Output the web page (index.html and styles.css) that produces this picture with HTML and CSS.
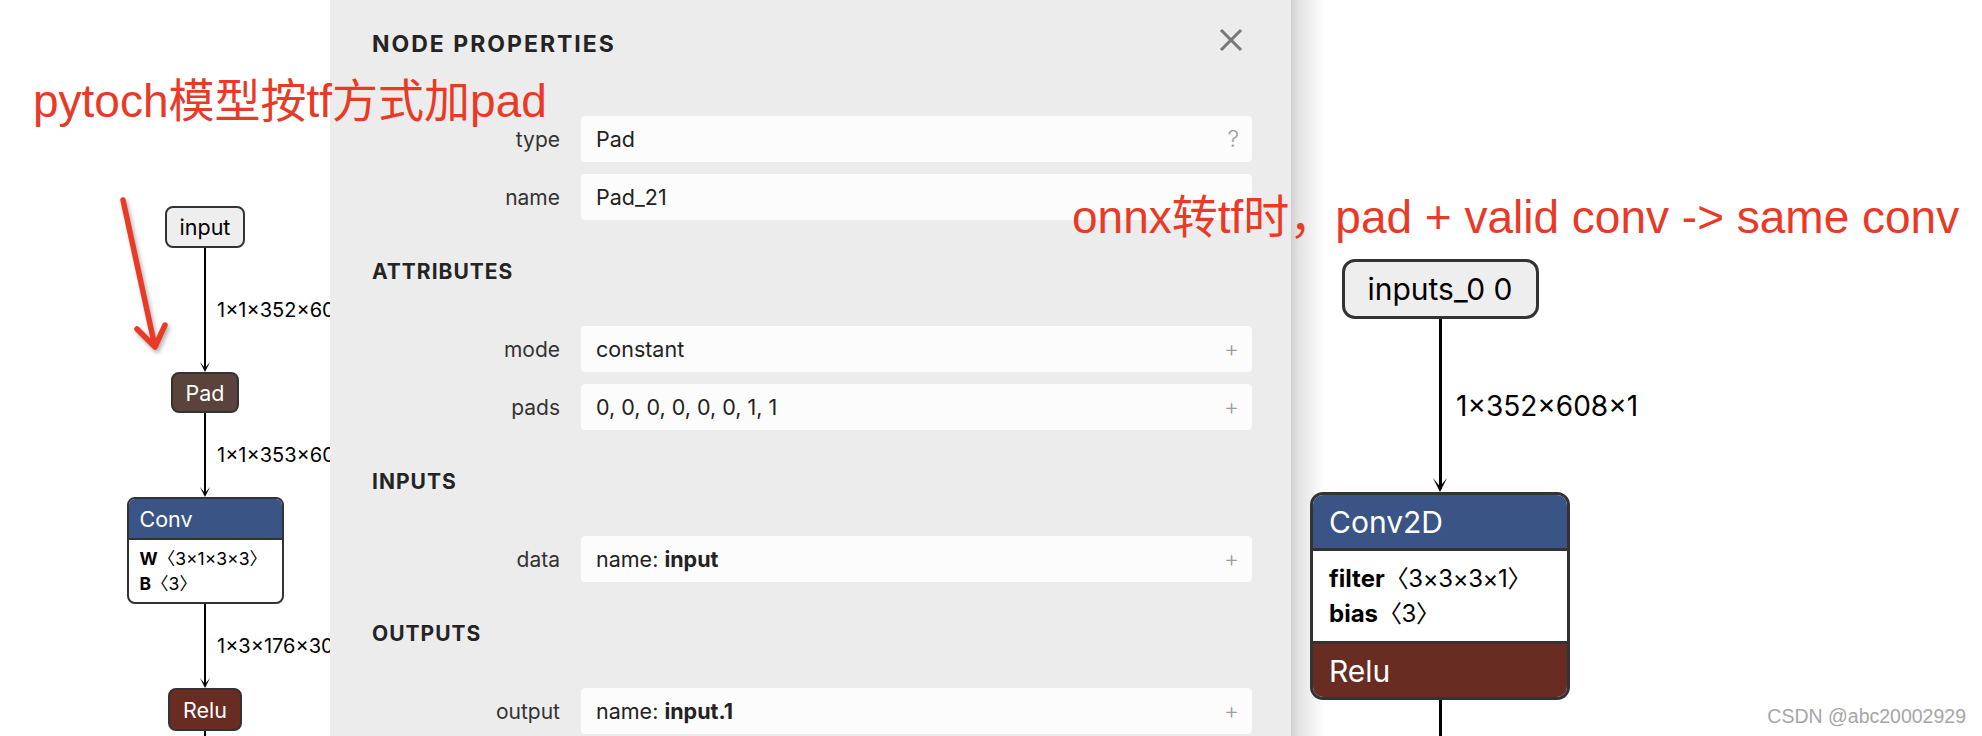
FILE: index.html
```html
<!DOCTYPE html>
<html lang="zh-CN">
<head>
    <meta charset="UTF-8">
    <meta name="viewport" content="width=device-width, initial-scale=1.0">
    <title>Pad_21 - Node Properties</title>
    <link rel="stylesheet" href="styles.css">
</head>
<body>
    <div class="screen">
        <!-- pytorch 导出的 onnx 图 -->
        <div class="canvas canvas-left">
            <div class="graph graph-left">
                <div class="node node-input">input</div>
                <div class="edge edge-first">
                    <span class="edge-label">1×1×352×608</span>
                    <svg class="edge-arrow" viewBox="0 0 10 10"><path d="M0 0 L5 10 L10 0 L5 6 Z"/></svg>
                </div>
                <div class="node node-tensor">Pad</div>
                <div class="edge">
                    <span class="edge-label">1×1×353×609</span>
                    <svg class="edge-arrow" viewBox="0 0 10 10"><path d="M0 0 L5 10 L10 0 L5 6 Z"/></svg>
                </div>
                <div class="node node-block">
                    <div class="node-head">Conv</div>
                    <div class="node-body">
                        <div><b>W</b><span class="shape">〈3×1×3×3〉</span></div>
                        <div><b>B</b><span class="shape">〈3〉</span></div>
                    </div>
                </div>
                <div class="edge">
                    <span class="edge-label">1×3×176×304</span>
                    <svg class="edge-arrow" viewBox="0 0 10 10"><path d="M0 0 L5 10 L10 0 L5 6 Z"/></svg>
                </div>
                <div class="node node-activation">Relu</div>
                <div class="edge edge-tail"></div>
            </div>

            <svg class="pointer" width="330" height="400" viewBox="0 0 330 400">
                <path d="M123 200 L155 347 M137 329 L155 347 L165 325"/>
            </svg>
        </div>

        <aside class="sidebar">
            <header class="sidebar-header">
                <h1 class="sidebar-title">NODE PROPERTIES</h1>
                <button class="close" title="Close">
                    <svg width="24" height="24" viewBox="0 0 24 24"><path d="M2 2 L22 22 M22 2 L2 22"/></svg>
                </button>
            </header>

            <div class="props props-first">
                <div class="prop">
                    <span class="prop-name">type</span>
                    <div class="prop-value"><span>Pad</span><span class="prop-icon">?</span></div>
                </div>
                <div class="prop">
                    <span class="prop-name">name</span>
                    <div class="prop-value"><span>Pad_21</span></div>
                </div>
            </div>

            <section>
                <h2 class="section-title">ATTRIBUTES</h2>
                <div class="props">
                    <div class="prop">
                        <span class="prop-name">mode</span>
                        <div class="prop-value"><span>constant</span><span class="prop-icon">+</span></div>
                    </div>
                    <div class="prop">
                        <span class="prop-name">pads</span>
                        <div class="prop-value"><span>0, 0, 0, 0, 0, 0, 1, 1</span><span class="prop-icon">+</span></div>
                    </div>
                </div>
            </section>

            <section>
                <h2 class="section-title">INPUTS</h2>
                <div class="props">
                    <div class="prop">
                        <span class="prop-name">data</span>
                        <div class="prop-value"><span>name: <b>input</b></span><span class="prop-icon">+</span></div>
                    </div>
                </div>
            </section>

            <section>
                <h2 class="section-title">OUTPUTS</h2>
                <div class="props">
                    <div class="prop">
                        <span class="prop-name">output</span>
                        <div class="prop-value"><span>name: <b>input.1</b></span><span class="prop-icon">+</span></div>
                    </div>
                </div>
            </section>
        </aside>

        <!-- onnx 转 tf 之后的图 -->
        <div class="canvas canvas-right">
            <div class="graph graph-right">
                <div class="node node-input">inputs_0 0</div>
                <div class="edge edge-first">
                    <span class="edge-label">1×352×608×1</span>
                    <svg class="edge-arrow" viewBox="0 0 10 10"><path d="M0 0 L5 10 L10 0 L5 6 Z"/></svg>
                </div>
                <div class="node node-block">
                    <div class="node-head">Conv2D</div>
                    <div class="node-body">
                        <div><b>filter</b><span class="shape">〈3×3×3×1〉</span></div>
                        <div><b>bias</b><span class="shape">〈3〉</span></div>
                    </div>
                    <div class="node-foot">Relu</div>
                </div>
                <div class="edge edge-tail"></div>
            </div>
        </div>

        <p class="note note-left">pytoch模型按tf方式加pad</p>
        <p class="note note-right">onnx转tf时，pad + valid conv -&gt; same conv</p>
        <div class="watermark">CSDN @abc20002929</div>
    </div>
</body>
</html>
```

FILE: styles.css
```css
:root {
    --panel-bg: #ececec;
    --value-bg: #fcfcfc;
    --node-border: #333;
    --layer-color: #3a5585;
    --tensor-color: #59433b;
    --activation-color: #682c23;
    --note-color: #e83a27;
}

* {
    margin: 0;
    padding: 0;
    box-sizing: border-box;
}

body {
    background: #fff;
    font-family: Inter, "Noto Sans CJK SC", sans-serif;
    color: #000;
    overflow: hidden;
}

.screen {
    position: relative;
    display: flex;
    width: 1982px;
    height: 736px;
    overflow: hidden;
}

/* 画布 */
.canvas {
    position: relative;
    height: 100%;
}

.canvas-left {
    width: 330px;
    flex: none;
}

.canvas-right {
    flex: 1;
    margin-left: -1px;
    border-left: 1px solid #b9b9b9;
    background: linear-gradient(to right, #d0d0d0, #e4e4e4 8px, #fff 34px);
}

.graph {
    display: flex;
    flex-direction: column;
    align-items: center;
}

.graph-left {
    width: 250px;
    margin-left: 80px;
    padding-top: 206px;
}

.graph-right {
    width: 298px;
    padding-top: 259px;
}

/* 节点 */
.node {
    display: flex;
    align-items: center;
    justify-content: center;
    flex: none;
    padding: 0 13px;
    border: 2px solid var(--node-border);
    border-radius: 8px;
    font-size: 21.5px;
    color: #fff;
    white-space: nowrap;
}

.node-input {
    height: 42px;
    background: #eee;
    color: #000;
}

.node-tensor {
    height: 41px;
    background: var(--tensor-color);
}

.node-activation {
    height: 43px;
    background: var(--activation-color);
}

.node-block {
    display: block;
    width: 157px;
    padding: 0;
    overflow: hidden;
    background: #fff;
}

.node-head {
    height: 41px;
    padding: 0 11px;
    display: flex;
    align-items: center;
    background: var(--layer-color);
    border-bottom: 2px solid var(--node-border);
}

.node-body {
    padding: 6px 11px;
    font-size: 17.5px;
    line-height: 25px;
    color: #000;
}

.node-body b {
    font-weight: 700;
}

.node-foot {
    display: flex;
    align-items: center;
    background: var(--activation-color);
    border-top: 3px solid var(--node-border);
}

/* 连线 */
.edge {
    position: relative;
    flex: none;
    width: 12px;
    height: 84px;
}

.edge::before {
    content: '';
    position: absolute;
    left: 5px;
    top: 0;
    bottom: 3px;
    width: 2px;
    background: #000;
}

.edge-first {
    height: 124px;
}

.edge-tail {
    height: 40px;
}

.edge-arrow {
    position: absolute;
    left: 1px;
    bottom: 0;
    width: 10px;
    height: 10px;
    fill: #000;
}

.edge-label {
    position: absolute;
    left: 18px;
    top: 50%;
    transform: translateY(-50%);
    font-size: 20px;
    white-space: nowrap;
}

/* 右侧图放大 */
.graph-right .node {
    border-width: 3px;
    border-radius: 13px;
    font-size: 30px;
    padding: 0 16px;
}

.graph-right .node-input {
    height: 60px;
    width: 197px;
}

.graph-right .node-block {
    width: 260px;
    padding: 0;
}

.graph-right .node-head {
    height: 56px;
    padding: 0 16px;
    border-bottom-width: 3px;
}

.graph-right .node-body {
    padding: 10px 16px;
    font-size: 24px;
    line-height: 35px;
}

.graph-right .shape {
    letter-spacing: -0.4px;
}

.graph-right .node-foot {
    height: 56px;
    padding: 0 16px;
}

.graph-right .edge {
    width: 16px;
    height: 173px;
}

.graph-right .edge::before {
    left: 6.5px;
    width: 3px;
}

.graph-right .edge-tail {
    height: 50px;
}

.graph-right .edge-arrow {
    left: 1px;
    width: 14px;
    height: 14px;
}

.graph-right .edge-label {
    left: 24px;
    font-size: 28px;
}

/* 红色箭头标注 */
.pointer {
    position: absolute;
    left: 0;
    top: 0;
    overflow: visible;
    fill: none;
    stroke: var(--note-color);
    stroke-width: 5.5;
    stroke-linecap: round;
    stroke-linejoin: round;
    filter: drop-shadow(2px 3px 2px rgba(0, 0, 0, 0.3));
}

/* 属性面板 */
.sidebar {
    position: relative;
    z-index: 1;
    flex: none;
    width: 961px;
    height: 100%;
    padding: 0 39px 0 42px;
    background: var(--panel-bg);
    color: #222;
}

.sidebar-header {
    display: flex;
    justify-content: space-between;
    align-items: center;
    height: 88px;
}

.sidebar-title {
    font-size: 23px;
    line-height: 27px;
    font-weight: 700;
    letter-spacing: 2px;
    color: #242424;
}

.close {
    margin: -8px 9px 0 0;
    border: none;
    background: none;
    cursor: pointer;
    display: flex;
}

.close svg {
    stroke: #777;
    stroke-width: 3;
    fill: none;
}

.props {
    display: flex;
    flex-direction: column;
    gap: 12px;
}

.props-first {
    margin-top: 28px;
}

.section-title {
    margin: 38px 0 41px;
    font-size: 21px;
    line-height: 27px;
    font-weight: 700;
    letter-spacing: 1px;
    color: #242424;
}

.prop {
    display: grid;
    grid-template-columns: 188px 1fr;
    column-gap: 21px;
    align-items: center;
}

.prop-name {
    text-align: right;
    font-size: 21px;
    color: #333;
}

.prop-value {
    display: flex;
    align-items: center;
    justify-content: space-between;
    height: 46px;
    padding: 0 13px 0 15px;
    border-radius: 4px;
    background: var(--value-bg);
    font-size: 21.5px;
    color: #222;
}

.prop-value b {
    font-weight: 700;
}

.prop-icon {
    font-size: 23px;
    font-weight: 300;
    color: #9c9c9c;
}

/* 标注文字 */
.note {
    position: absolute;
    z-index: 2;
    margin: 0;
    white-space: nowrap;
    font-family: "Liberation Sans", "Noto Sans CJK SC", sans-serif;
    color: var(--note-color);
}

.note-left {
    left: 33px;
    top: 74px;
    font-size: 46px;
    line-height: 54px;
}

.note-right {
    left: 1072px;
    top: 190px;
    font-size: 46px;
    line-height: 54px;
}

.watermark {
    position: absolute;
    z-index: 2;
    right: 16px;
    bottom: 8px;
    font-family: "Liberation Sans", sans-serif;
    font-size: 19.5px;
    color: #a6a6a6;
}
```
